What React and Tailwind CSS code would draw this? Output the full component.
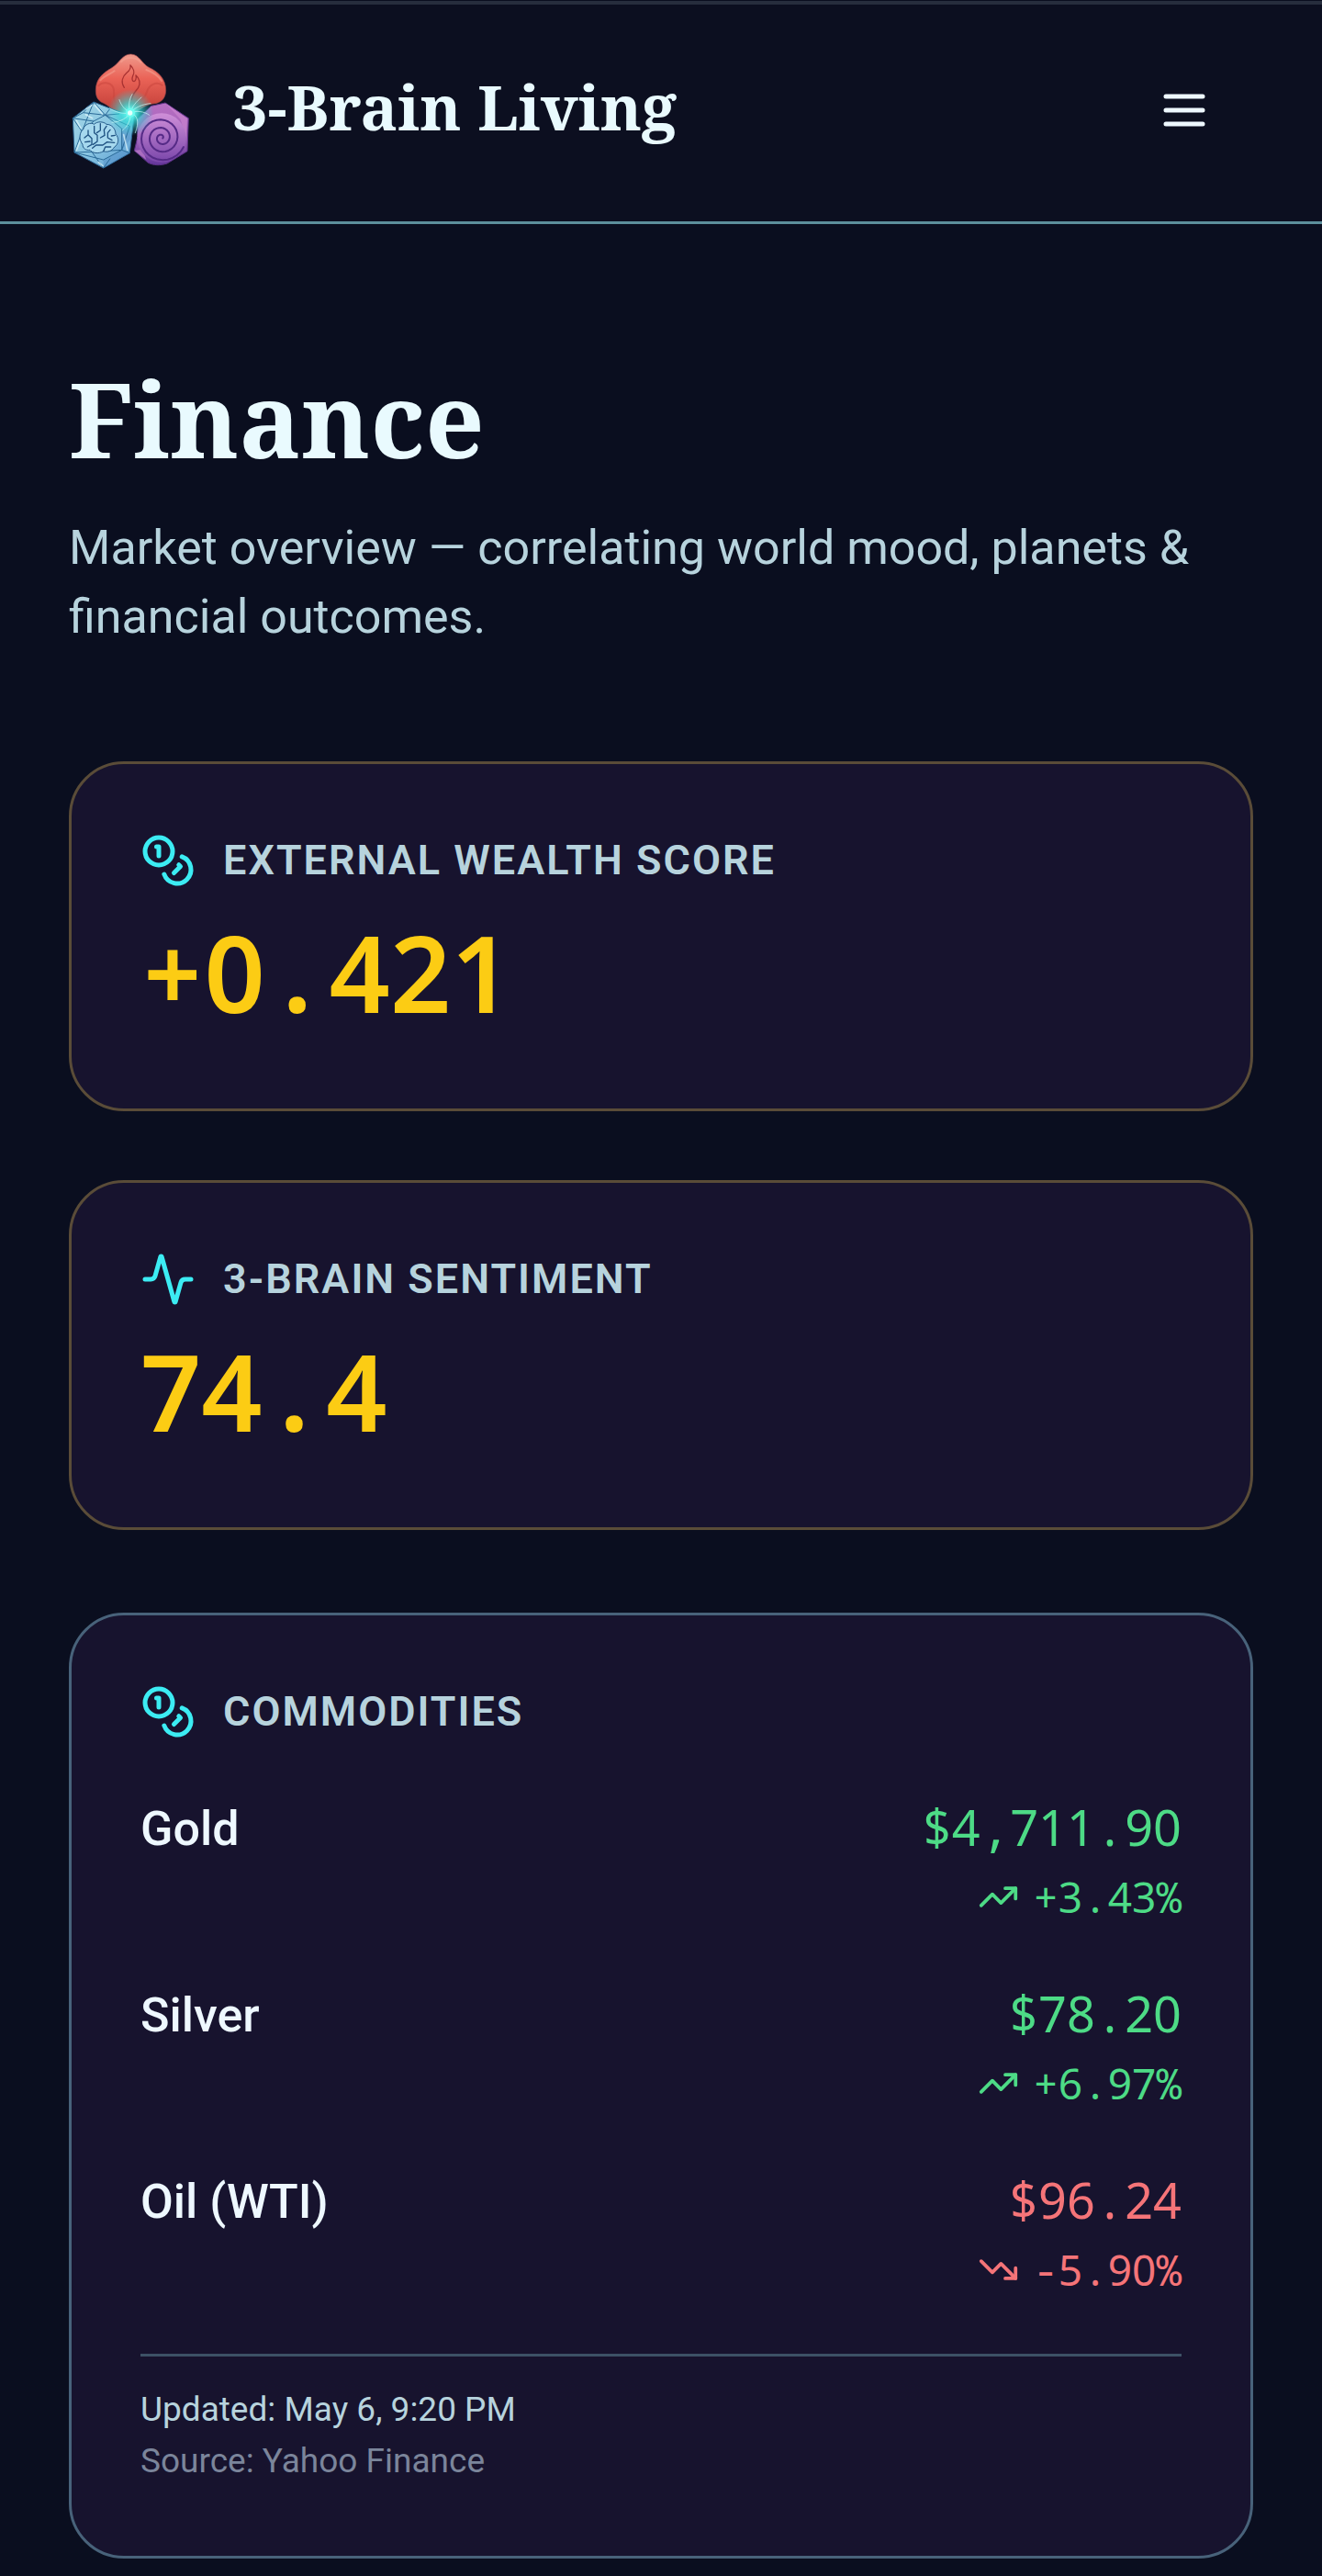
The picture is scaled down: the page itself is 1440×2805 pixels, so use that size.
import React from "react";
import { TrendingUp, TrendingDown } from "lucide-react";

function spiralPath(cx, cy, turns, radius) {
  const points = [];
  const steps = Math.round(turns * 28);
  for (let i = 0; i <= steps; i++) {
    const t = i / steps;
    const angle = -t * turns * Math.PI * 2 + 0.4;
    const r = 4 + Math.pow(t, 1.15) * (radius - 4);
    points.push(`${(cx + r * Math.cos(angle)).toFixed(1)} ${(cy + r * Math.sin(angle)).toFixed(1)}`);
  }
  return "M" + points.join("L");
}

const SPIRAL = spiralPath(318, 300, 3, 78);

function Logo() {
  return (
    <svg viewBox="15 12 396 396" className="size-[132px] shrink-0" fill="none" aria-hidden="true">
      <defs>
        <linearGradient id="fire" x1="0" y1="0" x2="0" y2="1">
          <stop offset="0" stopColor="#f09a8c" />
          <stop offset="0.4" stopColor="#ea6357" />
          <stop offset="1" stopColor="#bd3a34" />
        </linearGradient>
        <linearGradient id="ice" x1="0" y1="0" x2="1" y2="1">
          <stop offset="0" stopColor="#a3d6e6" />
          <stop offset="0.5" stopColor="#8ac6e2" />
          <stop offset="1" stopColor="#5a9ad2" />
        </linearGradient>
        <linearGradient id="violet" x1="0" y1="0" x2="0" y2="1">
          <stop offset="0" stopColor="#b86fc2" />
          <stop offset="0.55" stopColor="#a262ba" />
          <stop offset="1" stopColor="#63369a" />
        </linearGradient>
        <linearGradient id="disc" x1="0" y1="0" x2="0" y2="1">
          <stop offset="0" stopColor="#cf8fd8" />
          <stop offset="1" stopColor="#7a46aa" />
        </linearGradient>
        <radialGradient id="glow">
          <stop offset="0" stopColor="#d8fffa" />
          <stop offset="0.16" stopColor="#5ff5ea" />
          <stop offset="0.42" stopColor="#35d9d6" stopOpacity="0.75" />
          <stop offset="1" stopColor="#35c9d0" stopOpacity="0" />
        </radialGradient>
      </defs>

      <path d="M218 27C198 27 188 40 172 58C152 80 106 88 103 142C102 166 110 180 128 187C150 196 168 224 200 226C240 224 254 192 290 189C316 187 331 172 332 146C332 108 308 84 276 70C254 58 246 28 218 27Z" fill="url(#fire)" stroke="#9a4548" strokeWidth="2" />
      <path d="M110 132C122 116 150 116 160 136C168 156 152 172 176 196M322 130C300 112 276 130 270 150C262 176 244 184 232 196" stroke="#c8443c" strokeWidth="6" opacity="0.5" />
      <path d="M186 52C200 34 236 34 250 54M118 112C132 96 152 92 164 82M268 78C290 86 308 98 318 114" stroke="#f5a596" strokeWidth="6" strokeLinecap="round" opacity="0.5" />
      <path d="M196 136C184 118 190 100 204 88C214 80 218 72 216 63C228 74 230 88 224 98C220 108 222 116 228 116C234 114 236 104 234 96C246 106 250 122 242 136C236 146 222 156 220 176" stroke="#a83232" strokeWidth="4" strokeLinecap="round" strokeLinejoin="round" />

      <path d="M96 183L28 236L33 348L128 399L214 350L220 300L228 232L150 204Z" fill="url(#ice)" stroke="#2a6290" strokeWidth="3" strokeLinejoin="round" />
      <path d="M128 372L188 340L214 350L128 399ZM188 270L214 262L220 300L188 340Z" fill="#4a86c4" opacity="0.4" />
      <path d="M96 183L62 218L28 236L58 280L96 183L134 226L150 204M62 218L134 226L214 262M28 236L96 246L134 226L188 270M58 280L96 246M58 280L33 348L128 372L188 340L214 262M188 270L188 340L214 350M33 348L90 346L128 399L150 368M188 340L90 346M134 226L180 222" stroke="#2a6a98" strokeWidth="3" strokeLinejoin="round" />
      <path d="M40 244L54 268M100 194L124 222M40 340L56 300M194 290L206 340M112 380L126 392M70 224L92 236M72 206L90 194" stroke="#def6fc" strokeWidth="5" strokeLinecap="round" opacity="0.7" />
      <path d="M60 322C46 304 50 282 62 272C66 256 86 248 98 256C106 246 128 246 138 256C156 256 168 272 168 288C180 300 178 322 164 330C156 344 140 348 128 344C112 354 90 350 84 340C70 342 60 334 60 322Z" fill="#a6d8ee" stroke="#235a8a" strokeWidth="3" />
      <path d="M66 300L78 290V276M78 290L90 302V322L76 330M98 262V284L108 292V312M118 254V276L106 284M138 262L130 274L132 292L118 300M150 274L142 284V300L156 308M166 292L154 294M164 316L140 314L126 324H104L92 334M84 312L68 314M128 344L134 330L152 330M108 312L94 322" stroke="#1f5282" strokeWidth="4" strokeLinecap="round" strokeLinejoin="round" />

      <path d="M330 186L406 236L402 344L336 384C312 392 292 390 274 382L229 342L240 296L238 240L284 196Z" fill="url(#violet)" stroke="#5b3084" strokeWidth="3" strokeLinejoin="round" />
      <path d="M330 186L402 238L398 300L380 240Z" fill="#cf88d2" opacity="0.6" />
      <path d="M229 342L256 338L268 372Z" fill="#c987d0" opacity="0.6" />
      <circle cx="318" cy="300" r="80" fill="url(#disc)" />
      <path d={SPIRAL} stroke="#552a86" strokeWidth="6" strokeLinecap="round" strokeLinejoin="round" />

      <circle cx="216" cy="218" r="76" fill="url(#glow)" />
      <path d="M216 218C222 196 236 182 252 168M216 218C232 200 256 190 282 188M216 218C236 210 262 214 278 226M216 218C240 226 246 246 232 284M216 218C218 244 206 264 190 276M216 218C206 236 184 248 156 250M216 218C196 224 170 218 148 204M216 218C200 210 186 196 180 176M216 218C208 196 212 174 222 158" stroke="#c4f8f5" strokeWidth="3" strokeLinecap="round" opacity="0.7" />
      <circle cx="216" cy="218" r="15" fill="#6ffbf0" />
      <circle cx="215" cy="219" r="8" fill="#e2fffb" />
    </svg>
  );
}

function MenuIcon() {
  return (
    <svg viewBox="0 0 24 24" className="size-[60px]" fill="none" stroke="currentColor" strokeWidth="2" strokeLinecap="round" aria-hidden="true">
      <path d="M4 6h16M4 12h16M4 18h16" />
    </svg>
  );
}

function CoinsIcon() {
  return (
    <svg viewBox="0 0 24 24" className="size-[60px] shrink-0 text-[#3cecf3]" fill="none" stroke="currentColor" strokeWidth="2" strokeLinecap="round" strokeLinejoin="round" aria-hidden="true">
      <circle cx="8" cy="8" r="6" />
      <path d="M18.09 10.37A6 6 0 1 1 10.34 18" />
      <path d="M7 6h1v4" />
      <path d="m16.71 13.88.7.71-2.82 2.82" />
    </svg>
  );
}

function ActivityIcon() {
  return (
    <svg viewBox="0 0 24 24" className="size-[60px] shrink-0 text-[#3cecf3]" fill="none" stroke="currentColor" strokeWidth="2" strokeLinecap="round" strokeLinejoin="round" aria-hidden="true">
      <path d="M22 12h-2.48a2 2 0 0 0-1.93 1.46l-2.35 8.36a.25.25 0 0 1-.48 0L9.24 2.18a.25.25 0 0 0-.48 0l-2.35 8.36A2 2 0 0 1 4.49 12H2" />
    </svg>
  );
}

// Digits use the proportional face's plain numerals; signs and points use the monospaced face.
function Figure({ children }) {
  return children.split(/(\d+)/).filter(Boolean).map((part, i) =>
    /\d/.test(part) ? <span key={i} className="font-['Noto_Sans',sans-serif]">{part}</span> : part
  );
}

function CardHeading({ icon, children }) {
  return (
    <div className="flex items-center gap-[30px]">
      {icon}
      <h2 className="text-[45px] leading-[60px] font-semibold tracking-[2px] text-[#b7d3dd] uppercase">{children}</h2>
    </div>
  );
}

function ScoreCard({ icon, title, value }) {
  return (
    <section className="rounded-[60px] border-[3px] border-[#5a4c38] bg-[#17132e] px-[75px] pt-[75px] pb-[87px]">
      <CardHeading icon={icon}>{title}</CardHeading>
      <p className="mt-[30px] font-['Noto_Sans_Mono',monospace] text-[116px] leading-[123px] font-semibold text-[#fccc14]">
        <Figure>{value}</Figure>
      </p>
    </section>
  );
}

const commodities = [
  { name: "Gold", price: "$4,711.90", change: "+3.43%", up: true },
  { name: "Silver", price: "$78.20", change: "+6.97%", up: true },
  { name: "Oil (WTI)", price: "$96.24", change: "-5.90%", up: false },
];

function CommodityRow({ name, price, change, up }) {
  const Trend = up ? TrendingUp : TrendingDown;
  return (
    <li className="flex items-start justify-between">
      <span className="text-[52px] leading-[75px] font-medium text-[#eef8ff]">{name}</span>
      <div className={up ? "flex flex-col items-end font-['Noto_Sans_Mono',monospace] text-[#4ddb86]" : "flex flex-col items-end font-['Noto_Sans_Mono',monospace] text-[#f57478]"}>
        <span className="text-[54px] leading-[70px]"><Figure>{price}</Figure></span>
        <span className="flex items-center gap-[15px] text-[46px] leading-[82px]">
          <Trend className="size-[45px]" aria-hidden="true" />
          <span><Figure>{change}</Figure></span>
        </span>
      </div>
    </li>
  );
}

export default function App() {
  return (
    <div className="min-h-screen bg-[#0a0e1f] pt-px font-['Roboto',sans-serif]">
      <header className="flex items-center justify-between border-t-4 border-b-[3px] border-t-[#272d3d] border-b-[#5d8f9c] bg-[#0c0f20] px-[75px] pt-[49px] pb-[55px]">
        <a href="#home" className="flex items-center gap-[46px]">
          <Logo />
          <span className="pb-2 font-['Noto_Serif',serif] text-[68px] leading-[90px] font-bold text-[#e9fafe]">3-Brain Living</span>
        </a>
        <button type="button" aria-label="Open menu" className="mr-[15px] flex size-[120px] items-center justify-center text-[#eef8ff]">
          <MenuIcon />
        </button>
      </header>

      <main className="px-[75px] pt-[150px] pb-5">
        <h1 className="font-['Noto_Serif',serif] text-[113px] leading-[123px] font-bold text-[#e9fafe]">Finance</h1>
        <p className="mt-[42px] text-[52px] leading-[75px] text-[#b7d3dd]">
          Market overview — correlating world mood, planets &amp; financial outcomes.
        </p>

        <div className="mt-[120px] flex flex-col gap-[75px]">
          <ScoreCard icon={<CoinsIcon />} title="External Wealth Score" value="+0.421" />
          <ScoreCard icon={<ActivityIcon />} title="3-Brain Sentiment" value="74.4" />
        </div>

        <section className="mt-[90px] rounded-[60px] border-[3px] border-[#48627a] bg-[#17132e] p-[75px]">
          <CardHeading icon={<CoinsIcon />}>Commodities</CardHeading>
          <ul className="mt-[60px] flex flex-col gap-[51px]">
            {commodities.map((item) => (
              <CommodityRow key={item.name} {...item} />
            ))}
          </ul>
          <footer className="mt-[51px] border-t-[3px] border-[#3d5166] pt-[30px] text-[37px] leading-[56px]">
            <p className="text-[#b7d3dd]">Updated: May 6, 9:20 PM</p>
            <p className="text-[#7b859b]">Source: Yahoo Finance</p>
          </footer>
        </section>
      </main>
    </div>
  );
}
